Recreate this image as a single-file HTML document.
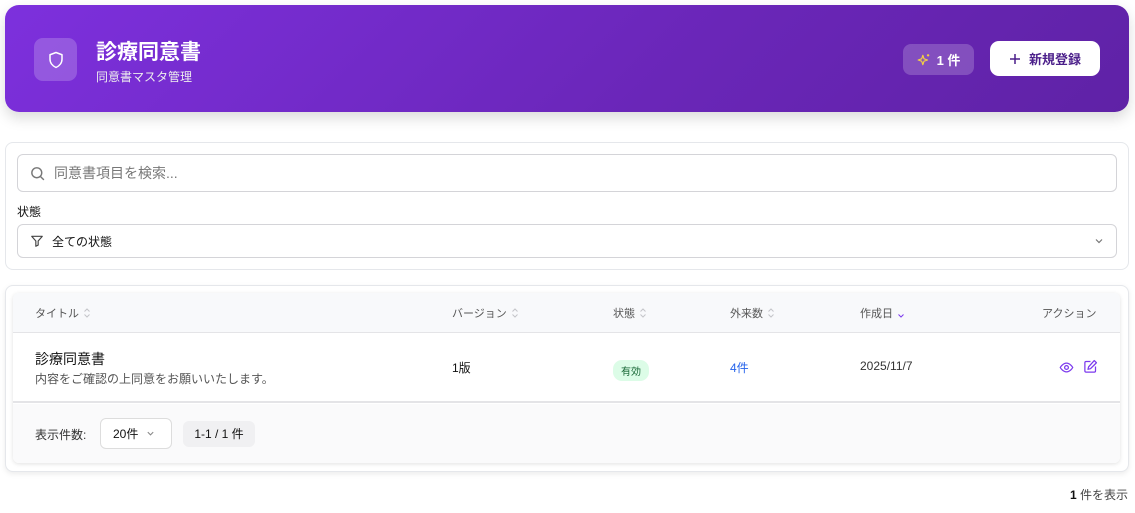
<!DOCTYPE html>
<html><head><meta charset="utf-8"><style>
*{box-sizing:border-box;margin:0;padding:0}
body{width:1135px;height:513px;background:#fff;font-family:"Liberation Sans","Noto Sans CJK JP",sans-serif;color:#111;position:relative;overflow:hidden}
.hdr{position:absolute;left:5px;top:5px;width:1124px;height:107px;border-radius:14px;background:linear-gradient(135deg,#7d30dd,#6a26b8 60%,#5f22a6);box-shadow:0 6px 14px rgba(0,0,0,.15)}
.ic{position:absolute;left:29px;top:33px;width:43px;height:43px;border-radius:9px;background:rgba(255,255,255,.2);display:flex;align-items:center;justify-content:center}
.t1{position:absolute;left:91px;top:31px;color:#fff;font-size:21px;font-weight:bold}
.t2{position:absolute;left:91px;top:63px;color:#eee;font-size:12px}
.badge{position:absolute;left:898px;top:39px;width:71px;height:31px;border-radius:8px;background:rgba(255,255,255,.2);color:#fff;font-size:13px;font-weight:bold;display:flex;align-items:center;justify-content:center;gap:6px}
.btn{position:absolute;left:985px;top:36px;width:110px;height:35px;border-radius:9px;background:#fff;color:#4b1f8a;font-size:13px;font-weight:bold;display:flex;align-items:center;justify-content:center;gap:8px}
.card{position:absolute;left:5px;width:1124px;border:1px solid #e5e7eb;border-radius:8px;background:#fff}
.inp{position:absolute;left:11px;width:1100px;border:1px solid #d4d4d8;border-radius:6px;display:flex;align-items:center}
.tbl{position:absolute;left:7px;top:7px;width:1107px;height:170px;border-radius:6px;box-shadow:0 1px 4px rgba(0,0,0,.12);overflow:hidden;background:#fff}
.th{position:absolute;top:0;left:0;right:0;height:40px;background:#f8f9fb;border-bottom:1px solid #e4e4e7;font-size:11px;color:#555}
.th span{position:absolute;top:12px;display:flex;align-items:center}
.th svg{margin-left:4px}
.row{position:absolute;top:40px;left:0;right:0;height:70px;border-bottom:2px solid #e4e4e7;font-size:12px}
.ft{position:absolute;top:111px;left:0;right:0;bottom:0;background:#fafafb}
</style></head><body>
<div class="hdr">
 <div class="ic"><svg width="18" height="20" viewBox="0 0 24 24" fill="none" stroke="#fff" stroke-width="2" stroke-linejoin="round"><path d="M12 2l8 3v6c0 5-3.5 9-8 11-4.5-2-8-6-8-11V5z"/></svg></div>
 <div class="t1">診療同意書</div>
 <div class="t2">同意書マスタ管理</div>
 <div class="badge"><svg width="14" height="14" viewBox="0 0 24 24" fill="none" stroke="#f5d142" stroke-width="2" stroke-linejoin="round"><path d="M10 4l2 6 6 2-6 2-2 6-2-6-6-2 6-2z"/><path d="M19 2v4M17 4h4"/></svg>1 件</div>
 <div class="btn"><svg width="12" height="12" viewBox="0 0 12 12" stroke="#4b1f8a" stroke-width="1.5"><path d="M6 1v10M1 6h10"/></svg>新規登録</div>
</div>
<div class="card" style="top:142px;height:128px">
 <div class="inp" style="top:11px;height:38px"><svg style="margin:0 8px 0 11px" width="17" height="17" viewBox="0 0 24 24" fill="none" stroke="#777" stroke-width="2"><circle cx="11" cy="11" r="7"/><path d="M16 16l5 5"/></svg><span style="font-size:14px;color:#777">同意書項目を検索...</span></div>
 <div style="position:absolute;left:11px;top:60px;font-size:12px">状態</div>
 <div class="inp" style="top:81px;height:34px"><svg style="margin:0 8px 0 12px" width="14" height="14" viewBox="0 0 24 24" fill="none" stroke="#444" stroke-width="2" stroke-linejoin="round"><path d="M3 4h18l-7 8v7l-4 2v-9z"/></svg><span style="font-size:12px">全ての状態</span><svg style="margin-left:auto;margin-right:12px" width="10" height="10" viewBox="0 0 10 10" fill="none" stroke="#777" stroke-width="1.2"><path d="M2 3.5l3 3 3-3"/></svg></div>
</div>
<div class="card" style="top:285px;height:187px;box-shadow:0 2px 6px rgba(0,0,0,.08)">
 <div class="tbl">
  <div class="th">
   <span style="left:22px">タイトル<svg width="8" height="12" viewBox="0 0 8 12" fill="none" stroke="#c4c4c8"><path d="M1.5 4.5L4 2l2.5 2.5M1.5 7.5L4 10l2.5-2.5"/></svg></span>
   <span style="left:439px">バージョン<svg width="8" height="12" viewBox="0 0 8 12" fill="none" stroke="#c4c4c8"><path d="M1.5 4.5L4 2l2.5 2.5M1.5 7.5L4 10l2.5-2.5"/></svg></span>
   <span style="left:600px">状態<svg width="8" height="12" viewBox="0 0 8 12" fill="none" stroke="#c4c4c8"><path d="M1.5 4.5L4 2l2.5 2.5M1.5 7.5L4 10l2.5-2.5"/></svg></span>
   <span style="left:717px">外来数<svg width="8" height="12" viewBox="0 0 8 12" fill="none" stroke="#c4c4c8"><path d="M1.5 4.5L4 2l2.5 2.5M1.5 7.5L4 10l2.5-2.5"/></svg></span>
   <span style="left:847px">作成日<svg width="8" height="12" viewBox="0 0 8 12" fill="none" stroke="#7c3aed"><path d="M1.5 7.5L4 10l2.5-2.5"/></svg></span>
   <span style="left:1029px">アクション</span></div>
  <div class="row">
   <div style="position:absolute;left:22px;top:16px;font-size:14px">診療同意書</div>
   <div style="position:absolute;left:22px;top:37px;color:#555">内容をご確認の上同意をお願いいたします。</div>
   <div style="position:absolute;left:439px;top:26px">1版</div>
   <div style="position:absolute;left:600px;top:27px;background:#dcfce7;color:#166534;font-size:10px;padding:3px 8px;border-radius:9px">有効</div>
   <div style="position:absolute;left:717px;top:26px;color:#2563eb">4件</div>
   <div style="position:absolute;left:847px;top:26px;color:#333">2025/11/7</div>
   <svg style="position:absolute;left:1046px;top:27px" width="15" height="15" viewBox="0 0 24 24" fill="none" stroke="#7c3aed" stroke-width="2"><path d="M2 12s4-7 10-7 10 7 10 7-4 7-10 7S2 12 2 12z"/><circle cx="12" cy="12" r="3"/></svg>
   <svg style="position:absolute;left:1070px;top:26px" width="15" height="15" viewBox="0 0 24 24" fill="none" stroke="#7c3aed" stroke-width="2" stroke-linejoin="round"><path d="M12 4H5a2 2 0 0 0-2 2v13a2 2 0 0 0 2 2h13a2 2 0 0 0 2-2v-7"/><path d="M18 2.5l3.5 3.5L12 15.5 8 16.5l1-4z"/></svg>
  </div>
  <div class="ft">
   <div style="position:absolute;left:22px;top:22px;font-size:12px;color:#333">表示件数:</div>
   <div style="position:absolute;left:87px;top:14px;width:72px;height:31px;border:1px solid #ddd;border-radius:6px;background:#fff;font-size:12px;padding:0 0 0 12px;display:flex;align-items:center;gap:8px">20件<svg width="9" height="9" viewBox="0 0 10 10" fill="none" stroke="#888" stroke-width="1.2"><path d="M2 3.5l3 3 3-3"/></svg></div>
   <div style="position:absolute;left:170px;top:17px;width:72px;height:26px;border-radius:6px;background:#f0f0f2;font-size:12px;text-align:center;line-height:26px">1-1 / 1 件</div>
  </div>
 </div>
</div>
<div style="position:absolute;right:7px;top:486px;font-size:12px;color:#444"><b style="color:#111">1</b> 件を表示</div>
</body></html>
